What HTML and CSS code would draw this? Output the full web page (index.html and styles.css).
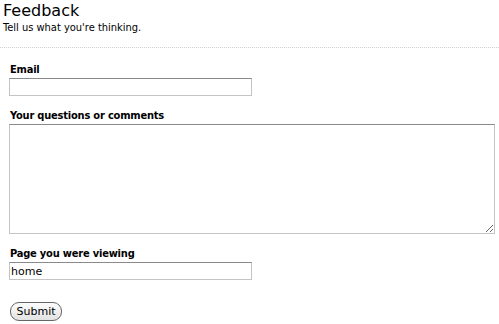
FILE: index.html
```html
<!DOCTYPE html>
<html lang="en">

<head>
    <meta charset="UTF-8">
    <title>Feedback</title>
    <link rel="stylesheet" href="styles.css">
</head>

<body>

    <!-- Page header -->
    <div class="header">
        <h1>Feedback</h1>
        <p>Tell us what you're thinking.</p>
    </div>

    <!-- Feedback form -->
    <form class="feedback-form">
        <div class="field">
            <label for="email">Email</label>
            <input type="text" id="email" name="email" class="short">
        </div>

        <div class="field">
            <label for="comments">Your questions or comments</label>
            <textarea id="comments" name="comments"></textarea>
        </div>

        <div class="field">
            <label for="page">Page you were viewing</label>
            <input type="text" id="page" name="page" class="short" value="home">
        </div>

        <button type="submit">Submit</button>
    </form>

</body>

</html>
```

FILE: styles.css
```css
body {
    margin: 0;
    padding: 0;
    font-family: 'DejaVu Sans Condensed', 'DejaVu Sans', sans-serif;
    color: #000;
    background: #fff;
}

.header {
    padding: 1px 0 0 3px;
    border-bottom: 1px dotted #d0d0d0;
    height: 48px;
    box-sizing: border-box;
}

.header h1 {
    margin: 0;
    font-family: 'DejaVu Sans', sans-serif;
    font-size: 16px;
    font-weight: normal;
    line-height: 20px;
}

.header p {
    margin: 0;
    font-size: 11px;
    line-height: 14px;
}

.feedback-form {
    padding: 15px 5px 0 9px;
}

.field {
    margin-bottom: 13px;
}

.field label {
    display: block;
    font-size: 11px;
    font-weight: bold;
    line-height: 13px;
    margin-bottom: 2px;
    padding-left: 1px;
    letter-spacing: -0.2px;
}

.field input,
.field textarea {
    display: block;
    box-sizing: border-box;
    margin: 0;
    border: 1px solid #c4c4c4;
    border-top-color: #8a8a8a;
    font-family: 'DejaVu Sans', sans-serif;
    font-size: 11px;
    padding: 1px 1px;
}

.field input.short {
    width: 243px;
    height: 18px;
}

.field textarea {
    width: 486px;
    height: 110px;
    resize: both;
}

.feedback-form button {
    margin: 9px 0 0 1px;
    padding: 0;
    width: 52px;
    height: 19px;
    font-family: 'DejaVu Sans', sans-serif;
    font-size: 11px;
    background: linear-gradient(#fdfdfd, #e2e2e2);
    border: 1px solid #666;
    border-radius: 9px;
    color: #000;
}
```
